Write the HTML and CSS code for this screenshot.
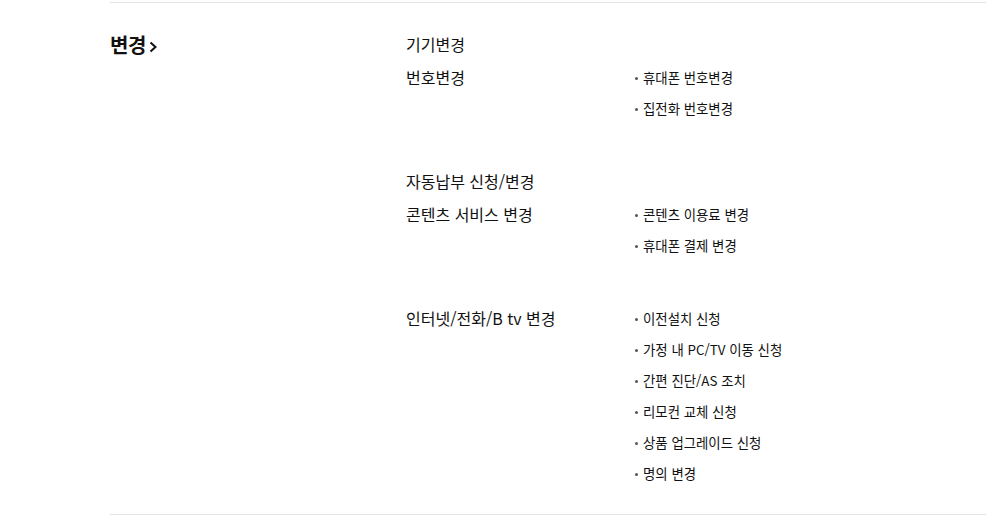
FILE: index.html
```html
<!DOCTYPE html>
<html lang="ko">
<head>
  <meta charset="UTF-8">
  <meta name="viewport" content="width=device-width, initial-scale=1.0">
  <title>변경</title>
  <link rel="stylesheet" href="styles.css">
</head>
<body>
  <div class="menu-section">
    <h3 class="menu-title">변경<svg class="menu-arrow" width="10" height="14" viewBox="0 0 10 14"><path d="M2.5 2.5 L7.5 7 L2.5 11.5" fill="none" stroke="#111" stroke-width="2"/></svg></h3>
    <ul class="menu-list">
      <li class="menu-item">
        <span class="menu-label">기기변경</span>
      </li>
      <li class="menu-item has-sub">
        <span class="menu-label">번호변경</span>
        <ul class="sub-list">
          <li class="sub-item">휴대폰 번호변경</li>
          <li class="sub-item">집전화 번호변경</li>
        </ul>
      </li>
      <li class="menu-item">
        <span class="menu-label">자동납부 신청/변경</span>
      </li>
      <li class="menu-item has-sub">
        <span class="menu-label">콘텐츠 서비스 변경</span>
        <ul class="sub-list">
          <li class="sub-item">콘텐츠 이용료 변경</li>
          <li class="sub-item">휴대폰 결제 변경</li>
        </ul>
      </li>
      <li class="menu-item has-sub last">
        <span class="menu-label">인터넷/전화/B tv 변경</span>
        <ul class="sub-list">
          <li class="sub-item">이전설치 신청</li>
          <li class="sub-item">가정 내 PC/TV 이동 신청</li>
          <li class="sub-item">간편 진단/AS 조치</li>
          <li class="sub-item">리모컨 교체 신청</li>
          <li class="sub-item">상품 업그레이드 신청</li>
          <li class="sub-item">명의 변경</li>
        </ul>
      </li>
    </ul>
  </div>
</body>
</html>
```

FILE: styles.css
```css
/* 메뉴 섹션 */
body {
  margin: 0;
  background: #fff;
  color: #111;
  font-family: "Noto Sans CJK KR", "Noto Sans", sans-serif;
}

.menu-section {
  display: flex;
  margin: 2px 0 0 110px;
  padding: 31px 0 31px;
  border-top: 1px solid #e4e4e4;
  border-bottom: 1px solid #e4e4e4;
}

.menu-title {
  width: 296px;
  margin: 0;
  font-size: 20px;
  font-weight: 700;
  line-height: 22px;
  letter-spacing: -0.5px;
}

.menu-arrow {
  vertical-align: -1px;
  margin-left: 2px;
}

.menu-list {
  list-style: none;
  margin: 0;
  padding: 0;
  flex: 1;
}

.menu-item {
  display: flex;
  margin-bottom: 13px;
}

.menu-item.has-sub {
  margin-bottom: 53px;
}

.menu-item.last {
  margin-bottom: 0;
}

.menu-label {
  width: 228px;
  font-size: 16px;
  line-height: 20px;
}

.sub-list {
  list-style: none;
  margin: 0;
  padding: 0;
  display: flex;
  flex-direction: column;
  gap: 11px;
}

.sub-item {
  position: relative;
  padding-left: 9px;
  font-size: 13.4px;
  line-height: 20px;
}

.sub-item::before {
  content: "";
  position: absolute;
  left: 1px;
  top: 10px;
  width: 3px;
  height: 3px;
  border-radius: 50%;
  background: #555;
}
```
